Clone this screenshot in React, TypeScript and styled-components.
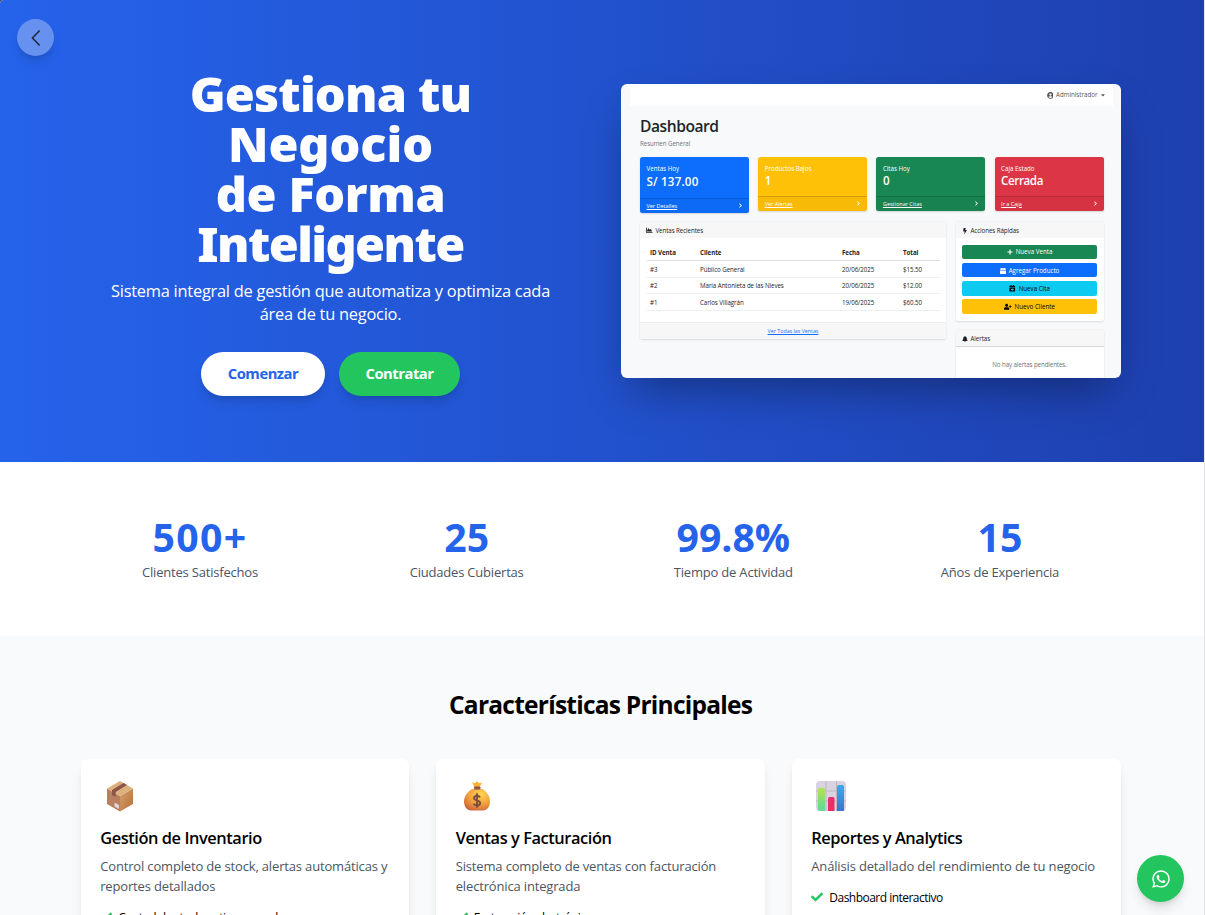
import React from "react";
import styled, { createGlobalStyle } from "styled-components";
import {
  FaWhatsapp,
  FaCheck,
  FaChartArea,
  FaBolt,
  FaPlus,
  FaBox,
  FaCalendarPlus,
  FaUserPlus,
  FaBell,
  FaUserCircle,
  FaCaretDown,
  FaChevronRight,
} from "react-icons/fa";

const GlobalStyle = createGlobalStyle`
  *, *::before, *::after { box-sizing: border-box; }
  body {
    margin: 0;
    font-family: "Open Sans", "Noto Sans", sans-serif;
    background: #4a4a4a;
    color: #000;
    overflow: hidden;
  }
  h1, h2, h3, p, ul { margin: 0; padding: 0; }
  svg { display: block; flex: none; }
`;

const Page = styled.div`
  position: relative;
  height: 915px;
  overflow: hidden;
  background: #fff;
  border-top-left-radius: 4px;
  border-right: 1px solid #e4e4e6;
`;

/* ---------- Hero ---------- */

const Hero = styled.header`
  height: 462px;
  padding: 68px 83px 0 81px;
  display: grid;
  grid-template-columns: 499px 500px;
  column-gap: 41px;
  align-items: start;
  background: linear-gradient(to right, #2563eb, #1e40af);
`;

const HeroCopy = styled.div`
  display: flex;
  flex-direction: column;
  align-items: center;
  text-align: center;
  color: #fff;
`;

const HeroTitle = styled.h1`
  font-family: "Noto Sans", "Open Sans", sans-serif;
  font-size: 48.6px;
  line-height: 50px;
  font-weight: 900;
  white-space: nowrap;
`;

const TitleLine = styled.span<{ $spacing: number }>`
  display: block;
  letter-spacing: ${(p) => p.$spacing}px;
`;

const HeroLead = styled.p`
  margin-top: 11px;
  font-size: 16.4px;
  line-height: 23.3px;
  letter-spacing: -0.24px;
  white-space: nowrap;
`;

const HeroActions = styled.div`
  display: flex;
  gap: 14px;
  margin-top: 26px;
`;

const PillButton = styled.button<{ $tone: "light" | "green"; $width: number }>`
  width: ${(p) => p.$width}px;
  height: 44px;
  padding: 0 0 2px;
  border: 0;
  border-radius: 22px;
  background: ${(p) => (p.$tone === "light" ? "#fff" : "#22c55e")};
  color: ${(p) => (p.$tone === "light" ? "#2563eb" : "#fff")};
  font: 700 14.8px "Open Sans", sans-serif;
  letter-spacing: -0.5px;
  box-shadow: 0 8px 12px -3px rgba(0, 0, 0, 0.12), 0 3px 5px -2px rgba(0, 0, 0, 0.1);
`;

const BackButton = styled.button`
  position: absolute;
  left: 17px;
  top: 19px;
  width: 37px;
  height: 37px;
  padding: 0;
  border: 0;
  border-radius: 50%;
  display: grid;
  place-items: center;
  background: rgba(255, 255, 255, 0.3);
  color: #1f2937;
  box-shadow: 0 8px 12px -3px rgba(0, 0, 0, 0.12), 0 3px 5px -2px rgba(0, 0, 0, 0.1);
`;

/* ---------- Dashboard preview ---------- */

const Preview = styled.div`
  margin-top: 16px;
  height: 293.5px;
  border-radius: 6px;
  overflow: hidden;
  background: #f8f9fa;
  color: #212529;
  font-size: 6.2px;
  line-height: 8px;
  box-shadow: 0 20px 42px -10px rgba(0, 0, 0, 0.36);
`;

const PreviewNav = styled.div`
  height: 21.5px;
  margin: 0 8px 0 9px;
  padding: 1px 7px 0 0;
  display: flex;
  align-items: center;
  justify-content: flex-end;
  gap: 2.5px;
  background: #fff;
  color: #555;
`;

const PreviewBody = styled.div`
  padding: 10px 17.5px 0 19px;
`;

const PreviewTitle = styled.div`
  font-size: 15.6px;
  line-height: 20px;
  font-weight: 600;
  letter-spacing: -0.45px;
`;

const PreviewSubtitle = styled.div`
  margin-top: 4px;
  letter-spacing: -0.08px;
  color: #6c757d;
`;

const TileRow = styled.div`
  display: grid;
  grid-template-columns: repeat(4, 1fr);
  gap: 9.3px;
  margin-top: 9px;
  height: 56px;
  align-items: start;
`;

const Tile = styled.div<{ $bg: string; $tall?: boolean }>`
  height: ${(p) => (p.$tall ? 56 : 54)}px;
  border-radius: 2.5px;
  overflow: hidden;
  display: flex;
  flex-direction: column;
  background: ${(p) => p.$bg};
  color: #fff;
  box-shadow: 0 1px 2px rgba(0, 0, 0, 0.15);
`;

const TileMain = styled.div`
  flex: 1;
  padding: 8.5px 6.5px 0;
`;

const TileValue = styled.div<{ $tall?: boolean }>`
  font-size: 11.6px;
  line-height: 14px;
  font-weight: 600;
  letter-spacing: ${(p) => (p.$tall ? 0.2 : -0.4)}px;
  margin-top: ${(p) => (p.$tall ? 2 : 1)}px;
`;

const TileFoot = styled.div`
  height: 14.5px;
  padding: 0 6px 0 6.5px;
  display: flex;
  align-items: center;
  justify-content: space-between;
  border-top: 1px solid rgba(0, 0, 0, 0.14);
  background: rgba(0, 0, 0, 0.03);
  font-size: 5.5px;
  text-decoration: underline;
`;

const PanelColumns = styled.div`
  display: grid;
  grid-template-columns: 306px 1fr;
  column-gap: 9.5px;
  margin-top: 9px;
  align-items: start;
`;

const SideColumn = styled.div`
  display: flex;
  flex-direction: column;
  gap: 9.5px;
`;

const Panel = styled.div`
  border-radius: 2.5px;
  overflow: hidden;
  background: #fff;
  box-shadow: 0 0.5px 2px rgba(0, 0, 0, 0.12);
`;

const PanelHead = styled.div<{ $ruled?: boolean }>`
  height: 16.5px;
  padding: 1.5px 0 0 6px;
  display: flex;
  align-items: center;
  gap: 3px;
  background: #f7f7f7;
  letter-spacing: -0.08px;
  border-bottom: ${(p) => (p.$ruled ? "1px solid #d9d9d9" : "0")};
`;

const SalesTable = styled.div`
  padding: 7px 6.5px 11.5px;
`;

const SalesRow = styled.div<{ $head?: boolean }>`
  height: 16.4px;
  display: grid;
  grid-template-columns: 50px 142px 61px 1fr;
  align-items: center;
  padding: 1.5px 0 0 3.5px;
  font-weight: ${(p) => (p.$head ? 700 : 400)};
  letter-spacing: -0.06px;
  border-bottom: 1px solid ${(p) => (p.$head ? "#dcdfe2" : "#eceef0")};
`;

const PanelFoot = styled.div`
  height: 17px;
  display: grid;
  place-items: center;
  border-top: 1px solid #eee;
  background: #f7f7f7;
  color: #0d6efd;
  font-size: 5.3px;
  text-decoration: underline;
`;

const QuickList = styled.div`
  display: flex;
  flex-direction: column;
  gap: 3.2px;
  padding: 6.5px 6.5px 7px;
`;

const QuickButton = styled.div<{ $bg: string; $color: string }>`
  height: 14.9px;
  padding-top: 1px;
  border-radius: 2px;
  display: flex;
  align-items: center;
  justify-content: center;
  gap: 3px;
  background: ${(p) => p.$bg};
  color: ${(p) => p.$color};
`;

const EmptyNote = styled.div`
  padding-top: 14.5px;
  height: 44px;
  text-align: center;
  letter-spacing: -0.1px;
  color: #6c757d;
`;

/* ---------- Stats ---------- */

const Stats = styled.section`
  height: 174px;
  padding: 55px 84px 0 80px;
  display: grid;
  grid-template-columns: repeat(4, 1fr);
  column-gap: 26.67px;
  text-align: center;
  background: #fff;
`;

const StatValue = styled.div<{ $spacing?: number }>`
  font-size: 39.2px;
  line-height: 40px;
  font-weight: 700;
  letter-spacing: ${(p) => p.$spacing ?? 0}px;
  color: #2563eb;
`;

const StatLabel = styled.div`
  margin-top: 4.5px;
  font-size: 13px;
  line-height: 20px;
  letter-spacing: -0.2px;
  color: #4b5563;
`;

/* ---------- Features ---------- */

const Features = styled.section`
  height: 279px;
  padding: 54px 83.4px 0 80.6px;
  background: #f9fafb;
`;

const FeaturesTitle = styled.h2`
  font-size: 24.5px;
  line-height: 30px;
  font-weight: 700;
  letter-spacing: -0.75px;
  text-align: center;
`;

const CardGrid = styled.div`
  display: grid;
  grid-template-columns: repeat(3, 1fr);
  gap: 26.67px;
  margin-top: 39px;
`;

const Card = styled.article`
  height: 260px;
  padding: 20px 18px 20px 19.6px;
  border-radius: 7px;
  background: #fff;
  box-shadow: 0 8px 13px -3px rgba(0, 0, 0, 0.1), 0 3px 5px -2px rgba(0, 0, 0, 0.08);
`;

const CardIcon = styled.div`
  height: 34px;
  padding-left: 4px;
`;

const CardTitle = styled.h3`
  margin-top: 13px;
  font-size: 16.4px;
  line-height: 24px;
  font-weight: 600;
  letter-spacing: -0.43px;
`;

const CardText = styled.p`
  margin-top: 6px;
  font-size: 13px;
  line-height: 20px;
  letter-spacing: -0.16px;
  color: #4b5563;
`;

const CheckList = styled.ul`
  margin-top: 11px;
  list-style: none;
`;

const CheckItem = styled.li`
  display: flex;
  align-items: center;
  gap: 6px;
  height: 20px;
  font-size: 12px;
  letter-spacing: -0.52px;
  white-space: nowrap;

  svg { color: #22c55e; }
`;

const ChatButton = styled.button`
  position: absolute;
  left: 1137px;
  top: 855px;
  width: 47px;
  height: 47px;
  padding: 0;
  border: 0;
  border-radius: 50%;
  display: grid;
  place-items: center;
  background: #22c55e;
  color: #fff;
  box-shadow: 0 8px 13px -3px rgba(0, 0, 0, 0.14), 0 3px 5px -2px rgba(0, 0, 0, 0.1);
`;

/* ---------- Illustrations ---------- */

const BoxIcon = () => (
  <svg width="32" height="34" viewBox="0 0 32 34">
    <defs>
      <linearGradient id="boxRight" x1="0" y1="0" x2="1" y2="1">
        <stop offset="0" stopColor="#d9a06c" />
        <stop offset="1" stopColor="#b4703c" />
      </linearGradient>
    </defs>
    <path d="M3 9.5 16 17v15.5L3 25z" fill="#b97f5f" />
    <path d="M29 9.5 16 17v15.5L29 25z" fill="url(#boxRight)" />
    <path d="M16 2 29 9.5 16 17 3 9.5z" fill="#dfb07f" />
    <path d="M19.5 4 23 6 11.6 13v5L8 16v-5z" fill="#8a5647" />
    <path d="m10.5 23.5 4.5 2.4v4l-4.5-2.4z" fill="#e2d3df" />
  </svg>
);

const MoneyIcon = () => (
  <svg width="32" height="34" viewBox="0 0 32 34">
    <defs>
      <radialGradient id="bag" cx="0.65" cy="0.25" r="0.85">
        <stop offset="0" stopColor="#ffd553" />
        <stop offset="0.55" stopColor="#f2a03c" />
        <stop offset="1" stopColor="#c9603c" />
      </radialGradient>
    </defs>
    <path d="m12 3 2.5 1.3L17 2.2l2 2 3-.8-2.500 5.200h-5z" fill="#f9b233" />
    <path d="M12 10h10.500C27 13 30 17.300 30 22.500c0 4.500-2.500 9-7 9H11c-4.500 0-7-4.500-7-9C4 17.300 7.500 13 12 10z" fill="url(#bag)" />
    <rect x="14" y="7.6" width="6.5" height="2.8" rx="1" fill="#8b5544" />
    <path
      d="M20 18.500c-.6-1.200-1.700-1.700-3-1.700-1.700 0-3 .9-3 2.300 0 3.400 6.200 1.700 6.200 5 0 1.500-1.400 2.400-3.200 2.400-1.500 0-2.700-.6-3.300-1.900M17 14.300v14.400"
      fill="none"
      stroke="#7d4b48"
      strokeWidth="1.9"
    />
  </svg>
);

const ChartIcon = () => (
  <svg width="34" height="34" viewBox="0 0 34 34">
    <defs>
      <linearGradient id="barGreen" x1="0" y1="0" x2="0" y2="1">
        <stop offset="0" stopColor="#b2e34f" />
        <stop offset="1" stopColor="#5fd99a" />
      </linearGradient>
      <linearGradient id="barBlue" x1="0" y1="0" x2="0" y2="1">
        <stop offset="0" stopColor="#38a9f8" />
        <stop offset="1" stopColor="#3b76c8" />
      </linearGradient>
    </defs>
    <rect x="1" y="2" width="30" height="30" rx="4" fill="#d9d3e0" />
    <path d="M11 2v30M21.500 2v30M1 12h30M1 22h30" stroke="#bdb5c6" strokeWidth="1" />
    <path d="M3 10.500q0-1.500 1.500-1.500h4q1.500 0 1.500 1.500V32H4q-1 0-1-1z" fill="url(#barGreen)" />
    <path d="M13 19.500q0-1.500 1.500-1.500h3.500q1.500 0 1.500 1.500V32H13z" fill="#ea2e68" />
    <path d="M22 7.500q0-1.500 1.500-1.500h4q1.500 0 1.500 1.500V32h-7z" fill="url(#barBlue)" />
  </svg>
);

/* ---------- Data ---------- */

const titleLines = [
  { text: "Gestiona tu", spacing: -0.82 },
  { text: "Negocio", spacing: -0.1 },
  { text: "de Forma", spacing: -0.4 },
  { text: "Inteligente", spacing: -1.6 },
];

const tiles = [
  { label: "Ventas Hoy", value: "S/ 137.00", link: "Ver Detalles", bg: "#0d6efd", tall: true },
  { label: "Productos Bajos", value: "1", link: "Ver Alertas", bg: "#ffc107" },
  { label: "Citas Hoy", value: "0", link: "Gestionar Citas", bg: "#198754" },
  { label: "Caja Estado", value: "Cerrada", link: "Ir a Caja", bg: "#dc3545" },
];

const sales = [
  ["#3", "Público General", "20/06/2025", "$15.50"],
  ["#2", "María Antonieta de las Nieves", "20/06/2025", "$12.00"],
  ["#1", "Carlos Villagrán", "19/06/2025", "$60.50"],
];

const quickActions = [
  { icon: <FaPlus size={6} />, label: "Nueva Venta", bg: "#198754", color: "#fff" },
  { icon: <FaBox size={6} />, label: "Agregar Producto", bg: "#0d6efd", color: "#fff" },
  { icon: <FaCalendarPlus size={6.5} />, label: "Nueva Cita", bg: "#0dcaf0", color: "#000" },
  { icon: <FaUserPlus size={7.5} />, label: "Nuevo Cliente", bg: "#ffc107", color: "#000" },
];

const stats = [
  { value: "500+", label: "Clientes Satisfechos", spacing: 1.3 },
  { value: "25", label: "Ciudades Cubiertas", spacing: 0.1 },
  { value: "99.8%", label: "Tiempo de Actividad", spacing: 0 },
  { value: "15", label: "Años de Experiencia", spacing: 0 },
];

const features = [
  {
    icon: <BoxIcon />,
    title: "Gestión de Inventario",
    text: "Control completo de stock, alertas automáticas y reportes detallados",
    item: "Control de stock en tiempo real",
  },
  {
    icon: <MoneyIcon />,
    title: "Ventas y Facturación",
    text: "Sistema completo de ventas con facturación electrónica integrada",
    item: "Facturación electrónica",
  },
  {
    icon: <ChartIcon />,
    title: "Reportes y Analytics",
    text: "Análisis detallado del rendimiento de tu negocio",
    item: "Dashboard interactivo",
  },
];

const DashboardPreview = () => (
  <Preview>
    <PreviewNav>
      <FaUserCircle size={6.8} />
      <span>Administrador</span>
      <FaCaretDown size={6} />
    </PreviewNav>
    <PreviewBody>
      <PreviewTitle>Dashboard</PreviewTitle>
      <PreviewSubtitle>Resumen General</PreviewSubtitle>
      <TileRow>
        {tiles.map((t) => (
          <Tile key={t.label} $bg={t.bg} $tall={t.tall}>
            <TileMain>
              <div>{t.label}</div>
              <TileValue $tall={t.tall}>{t.value}</TileValue>
            </TileMain>
            <TileFoot>
              <span>{t.link}</span>
              <FaChevronRight size={5} />
            </TileFoot>
          </Tile>
        ))}
      </TileRow>
      <PanelColumns>
        <Panel>
          <PanelHead>
            <FaChartArea size={6.5} />
            <span>Ventas Recientes</span>
          </PanelHead>
          <SalesTable>
            <SalesRow $head>
              <span>ID Venta</span>
              <span>Cliente</span>
              <span>Fecha</span>
              <span>Total</span>
            </SalesRow>
            {sales.map((row) => (
              <SalesRow key={row[0]}>
                {row.map((cell) => (
                  <span key={cell}>{cell}</span>
                ))}
              </SalesRow>
            ))}
          </SalesTable>
          <PanelFoot>Ver Todas las Ventas</PanelFoot>
        </Panel>
        <SideColumn>
          <Panel>
            <PanelHead>
              <FaBolt size={6} />
              <span>Acciones Rápidas</span>
            </PanelHead>
            <QuickList>
              {quickActions.map((a) => (
                <QuickButton key={a.label} $bg={a.bg} $color={a.color}>
                  {a.icon}
                  <span>{a.label}</span>
                </QuickButton>
              ))}
            </QuickList>
          </Panel>
          <Panel>
            <PanelHead $ruled>
              <FaBell size={6} />
              <span>Alertas</span>
            </PanelHead>
            <EmptyNote>No hay alertas pendientes.</EmptyNote>
          </Panel>
        </SideColumn>
      </PanelColumns>
    </PreviewBody>
  </Preview>
);

export default function App() {
  return (
    <>
      <GlobalStyle />
      <Page>
        <Hero>
          <HeroCopy>
            <HeroTitle>
              {titleLines.map((line) => (
                <TitleLine key={line.text} $spacing={line.spacing}>
                  {line.text}
                </TitleLine>
              ))}
            </HeroTitle>
            <HeroLead>
              Sistema integral de gestión que automatiza y optimiza cada
              <br />
              área de tu negocio.
            </HeroLead>
            <HeroActions>
              <PillButton $tone="light" $width={124}>
                Comenzar
              </PillButton>
              <PillButton $tone="green" $width={121}>
                Contratar
              </PillButton>
            </HeroActions>
          </HeroCopy>
          <DashboardPreview />
        </Hero>

        <Stats>
          {stats.map((s) => (
            <div key={s.label}>
              <StatValue $spacing={s.spacing}>{s.value}</StatValue>
              <StatLabel>{s.label}</StatLabel>
            </div>
          ))}
        </Stats>

        <Features>
          <FeaturesTitle>Características Principales</FeaturesTitle>
          <CardGrid>
            {features.map((f) => (
              <Card key={f.title}>
                <CardIcon>{f.icon}</CardIcon>
                <CardTitle>{f.title}</CardTitle>
                <CardText>{f.text}</CardText>
                <CheckList>
                  <CheckItem>
                    <FaCheck size={12} />
                    <span>{f.item}</span>
                  </CheckItem>
                </CheckList>
              </Card>
            ))}
          </CardGrid>
        </Features>

        <BackButton aria-label="Volver">
          <svg width="20" height="20" viewBox="0 0 20 20" fill="none" stroke="currentColor" strokeWidth="1.6" strokeLinecap="round" strokeLinejoin="round">
            <path d="M13.200 3 6.400 10l6.800 7" />
          </svg>
        </BackButton>
        <ChatButton aria-label="WhatsApp">
          <FaWhatsapp size={20} />
        </ChatButton>
      </Page>
    </>
  );
}
